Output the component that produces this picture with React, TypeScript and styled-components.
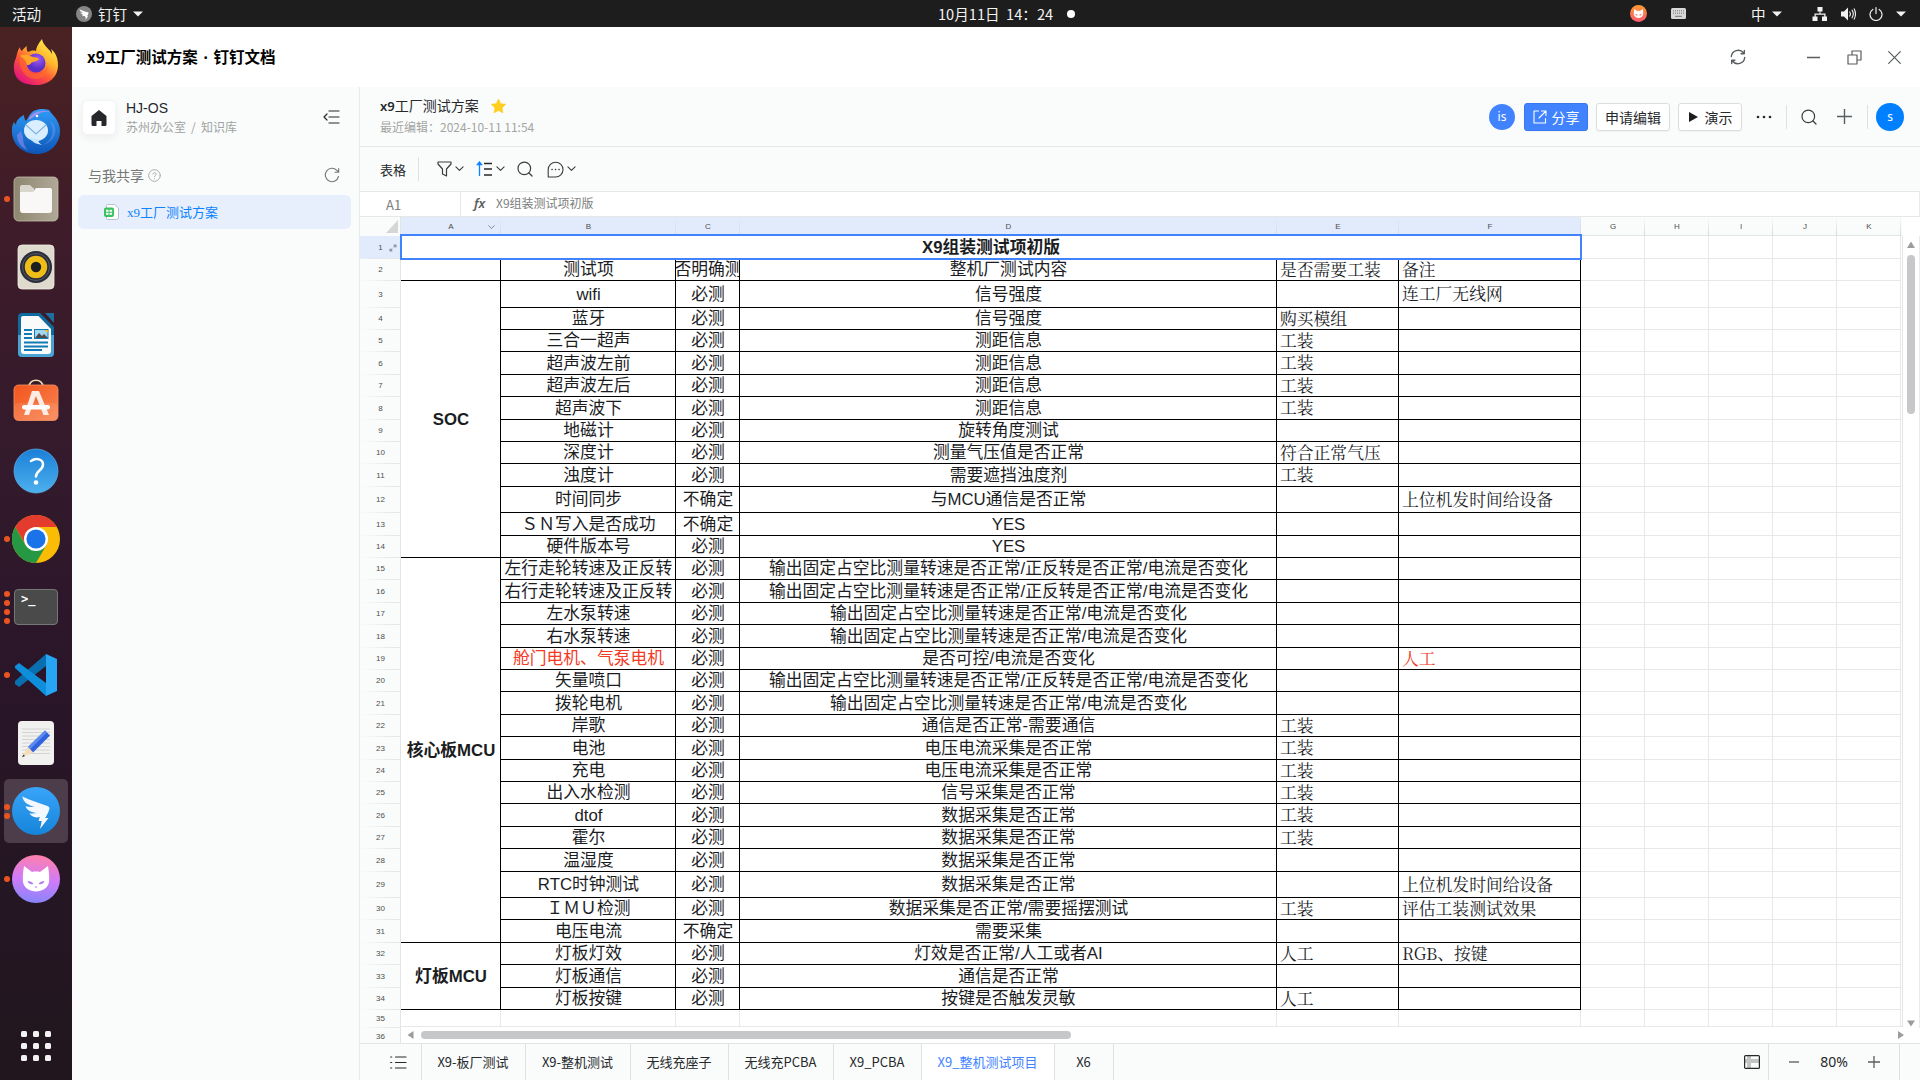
import React from "react";
import styled, { createGlobalStyle, css } from "styled-components";

const SANS = `"Noto Sans CJK SC", "Noto Sans", sans-serif`;
const CELL = `"Liberation Sans", "Noto Sans CJK SC", sans-serif`;
const SERIF = `"Noto Serif CJK SC", "Noto Serif CJK JP", "Liberation Serif", serif`;

const Global = createGlobalStyle`
  *, *::before, *::after { box-sizing: border-box; }
  body { margin: 0; background: #fff; font-family: ${SANS}; color: #26282b; overflow: hidden; }
  svg { display: block; flex: none; }
`;

/* ---------- shell ---------- */
const Desktop = styled.div`
  width: 1920px;
  height: 1080px;
  display: flex;
  flex-direction: column;
  overflow: hidden;
`;
const TopBar = styled.header`
  height: 27px;
  flex: none;
  display: flex;
  align-items: center;
  background: #1d1d1d;
  color: #f2f2f2;
  font-size: 15px;
  line-height: 26px;
  white-space: nowrap;
`;
const TopGroup = styled.div<{ $w: number; $pl?: number; $gap?: number }>`
  width: ${(p) => p.$w}px;
  height: 26px;
  padding-left: ${(p) => p.$pl ?? 0}px;
  display: flex;
  align-items: center;
  gap: ${(p) => p.$gap ?? 0}px;
`;
const TopLabel = styled.span`
  font-size: 14.6px;
`;
const Body = styled.div`
  flex: 1;
  display: flex;
  min-height: 0;
`;
const Dock = styled.nav`
  width: 72px;
  flex: none;
  display: flex;
  flex-direction: column;
  padding-top: 2px;
  background: linear-gradient(180deg, #4a2222 0%, #3f1c29 18%, #331a2c 42%, #2a1529 62%, #251624 80%, #21161d 100%);
`;
const DockItem = styled.div`
  height: 68px;
  display: grid;
  grid-template-columns: 4px 6px 52px 10px;
  align-items: center;
  position: relative;
`;
const Dots = styled.div`
  grid-column: 2;
  display: flex;
  flex-direction: column;
  gap: 3px;
  z-index: 1;
`;
const Dot = styled.i`
  width: 6px;
  height: 6px;
  border-radius: 50%;
  background: #e95420;
`;
const DockIcon = styled.div`
  grid-column: 3;
  padding-left: 2px;
  z-index: 1;
`;
const DockHighlight = styled.div`
  position: absolute;
  left: 4px;
  top: 2px;
  width: 64px;
  height: 64px;
  border-radius: 5px;
  background: #4d3d4b;
`;
const AppsGrid = styled.div`
  margin: auto auto 19px 21px;
  display: grid;
  grid-template-columns: repeat(3, 6px);
  grid-auto-rows: 6px;
  gap: 6px;
  i { background: #f3f1f1; border-radius: 1.5px; }
`;
const Window = styled.main`
  flex: 1;
  min-width: 0;
  display: flex;
  flex-direction: column;
  background: #fafcfb;
`;
const TitleBar = styled.div`
  height: 60px;
  flex: none;
  display: flex;
  align-items: center;
  padding: 0 19px 0 15px;
  background: #fff;
  color: #000;
`;
const WindowTitle = styled.h1`
  margin: -2px 0 0;
  flex: 1;
  font-size: 15.5px;
  font-weight: 700;
  span { font-family: "Noto Sans"; word-spacing: 1.6px; }
`;
const WindowButtons = styled.div`
  display: flex;
  align-items: center;
`;
const Gap = styled.span<{ $w: number; $h?: number }>`
  width: ${(p) => p.$w}px;
  height: ${(p) => p.$h ?? 0}px;
  flex: none;
`;
const Content = styled.div`
  flex: 1;
  min-height: 0;
  display: flex;
`;

/* ---------- sidebar ---------- */
const Sidebar = styled.aside`
  width: 288px;
  flex: none;
  border-right: 1px solid #e9ebea;
`;
const SpaceRow = styled.div`
  display: flex;
  align-items: flex-start;
  padding: 13px 19px 0 10px;
  height: 70px;
`;
const HomeButton = styled.div`
  width: 34px;
  height: 35px;
  display: grid;
  place-items: center;
  background: #fff;
  border: 1px solid #f2f3f3;
  border-radius: 5px;
  box-shadow: 0 3px 8px rgba(0, 0, 0, 0.06);
`;
const SpaceText = styled.div`
  flex: 1;
  padding-left: 10px;
`;
const SpaceName = styled.div`
  font: 14px/16px "Liberation Sans", sans-serif;
`;
const SpacePath = styled.div`
  font-size: 12px;
  line-height: 16px;
  margin-top: 3px;
  color: #a0a3a2;
  word-spacing: 2.4px;
`;
const SharedRow = styled.div`
  display: flex;
  align-items: center;
  height: 36px;
  padding: 0 19px 0 16px;
  font-size: 14px;
  color: #757877;
`;
const FileRow = styled.div`
  display: flex;
  align-items: center;
  gap: 8px;
  height: 34px;
  margin: 2px 8px 0 6px;
  padding-left: 26px;
  border-radius: 6px;
  background: #e7eefc;
  color: #0b84ff;
  font: 13px/34px "Liberation Serif", "Noto Sans CJK SC", sans-serif;
  span { padding-top: 1px; }
`;

/* ---------- document ---------- */
const Doc = styled.section`
  flex: 1;
  min-width: 0;
  display: flex;
  flex-direction: column;
`;
const DocHeader = styled.div`
  height: 60px;
  flex: none;
  display: flex;
  align-items: center;
  padding: 0 16px 0 20px;
  border-bottom: 1px solid #e6e8e7;
`;
const DocTitleBlock = styled.div`
  flex: 1;
  margin-top: -2px;
`;
const DocTitle = styled.div`
  display: flex;
  align-items: center;
  gap: 12px;
  font-size: 14px;
  font-weight: 400;
  line-height: 20px;
  b { font-family: "Noto Sans"; font-weight: 600; font-size: 13px; }
`;
const DocMeta = styled.div`
  font-size: 12px;
  line-height: 18px;
  margin-top: 2px;
  color: #a3a5a4;
`;
const Avatar = styled.div<{ $d: number; $c: string }>`
  width: ${(p) => p.$d}px;
  height: ${(p) => p.$d}px;
  border-radius: 50%;
  display: grid;
  place-items: center;
  background: ${(p) => p.$c};
  color: #fff;
  font: 12px/1 "Noto Sans", sans-serif;
`;
const Button = styled.div<{ $w: number; $primary?: boolean }>`
  width: ${(p) => p.$w}px;
  height: 28px;
  display: flex;
  align-items: center;
  justify-content: center;
  gap: 5px;
  font-size: 14px;
  line-height: 26px;
  border-radius: 3px;
  border: 1px solid #dcdedd;
  background: #fff;
  box-shadow: 0 1px 1px rgba(0, 0, 0, 0.04);
  ${(p) =>
    p.$primary &&
    css`
      background: #4183ff;
      border-color: #3a78f0;
      color: #fff;
    `}
`;
const VLine = styled.span<{ $h: number }>`
  width: 1px;
  height: ${(p) => p.$h}px;
  flex: none;
  background: #dfe1e0;
`;
const Toolbar = styled.div`
  height: 45px;
  flex: none;
  display: flex;
  align-items: center;
  padding-left: 20px;
  border-bottom: 1px solid #e6e8e7;
  font-size: 13px;
  line-height: 43px;
`;
const FormulaBar = styled.div`
  height: 25px;
  flex: none;
  display: flex;
  align-items: flex-start;
  background: #fff;
  border-bottom: 1px solid #e6e8e7;
  border-right: 1px solid #e9ebea;
  font-size: 12px;
  line-height: 22px;
  color: #7b7e7d;
`;
const NameBox = styled.div`
  width: 101px;
  height: 24px;
  padding: 1px 0 0 26px;
  border-right: 1px solid #e6e8e7;
  font-size: 13px;
  line-height: 23px;
`;
const Fx = styled.i`
  width: 35px;
  padding-left: 13px;
  color: #5c5f5e;
  font: italic 600 13px/23px "Noto Sans", sans-serif;
`;

/* ---------- sheet ---------- */
const Sheet = styled.div`
  height: 827px;
  flex: none;
  display: flex;
  position: relative;
  background: #fff;
  border-bottom: 1px solid #e3e5e4;
  overflow: hidden;
`;
const RowHeads = styled.div`
  width: 41px;
  flex: none;
  background: #fafcfb;
  border-right: 1px solid #e3e5e4;
`;
const Corner = styled.div`
  height: 19px;
  display: flex;
  justify-content: flex-end;
  align-items: flex-end;
  padding: 0 2px 3px 0;
`;
const RowHead = styled.div<{ $h: number; $on?: boolean }>`
  height: ${(p) => p.$h}px;
  display: flex;
  align-items: center;
  justify-content: center;
  padding-left: 1px;
  font: 8px/1 "Liberation Sans", sans-serif;
  color: #4b4e4d;
  position: relative;
  background: linear-gradient(90deg, transparent, #e6e8e7 80%) bottom / 100% 1px no-repeat, ${(p) => (p.$on ? "#e2ebfb" : "#fafcfb")};
  svg { position: absolute; right: 3px; bottom: 7px; }
`;
const GridArea = styled.div`
  width: 1501px;
  flex: none;
`;
const ColHeads = styled.div`
  display: flex;
  height: 19px;
  border-bottom: 1px solid #e3e5e4;
  background: #fafcfb;
`;
const ColHead = styled.div<{ $w: number; $on?: boolean }>`
  width: ${(p) => p.$w}px;
  display: flex;
  align-items: center;
  justify-content: center;
  font: 8px/1 "Liberation Sans", sans-serif;
  color: #4b4e4d;
  padding-top: 1px;
  position: relative;
  background: linear-gradient(180deg, transparent, #d5dae0) right / 1px 100% no-repeat, ${(p) => (p.$on ? "#e2ebfb" : "#fafcfb")};
  svg { position: absolute; right: 6px; top: 8px; }
`;
const Cells = styled.div<{ $cols: string; $rows: string }>`
  display: grid;
  grid-template-columns: ${(p) => p.$cols};
  grid-template-rows: ${(p) => p.$rows};
  height: 791px;
  overflow: hidden;
  border-bottom: 1px solid #e8e8e8;
`;
type CellProps = { $c: number; $r: number; $span?: number; $cspan?: number; $line?: string; $left?: boolean; $bold?: boolean; $red?: boolean };
const Cell = styled.div<CellProps>`
  grid-column: ${(p) => p.$c} / span ${(p) => p.$cspan ?? 1};
  grid-row: ${(p) => p.$r} / span ${(p) => p.$span ?? 1};
  border: 0 solid ${(p) => p.$line ?? "#000"};
  border-width: 0 1px 1px 0;
  display: flex;
  align-items: center;
  justify-content: center;
  padding-left: 1px;
  padding-top: ${(p) => (p.$bold ? 2 : 1)}px;
  white-space: nowrap;
  overflow: hidden;
  font: ${(p) => (p.$bold ? 700 : 400)} 16.8px/20px ${CELL};
  color: ${(p) => (p.$red ? "#f23a25" : "#1b1d1f")};
  ${(p) =>
    p.$left &&
    css`
      justify-content: flex-start;
      padding: 0 0 2px 3px;
      font-family: ${SERIF};
    `}
`;
const Selection = styled.div`
  position: absolute;
  left: 40px;
  top: 17px;
  width: 1182px;
  height: 26px;
  border: 2px solid #4183ff;
`;
const VScroll = styled.div`
  flex: 1;
  margin-top: 19px;
  height: 792px;
  border-left: 1px solid #e3e5e4;
  border-right: 1px solid #e9ebea;
  display: flex;
  flex-direction: column;
  align-items: center;
  padding: 5px 0 0 0;
`;
const Thumb = styled.div<{ $w: number; $h: number }>`
  width: ${(p) => p.$w}px;
  height: ${(p) => p.$h}px;
  border-radius: 4px;
  background: #c6c7c9;
`;
const HScroll = styled.div`
  position: absolute;
  left: 41px;
  bottom: 0;
  width: 1518px;
  height: 16px;
  display: flex;
  align-items: center;
  padding: 0 14px 0 6px;
  background: #fff;
`;

/* ---------- footer ---------- */
const Footer = styled.div`
  flex: 1;
  display: flex;
  align-items: stretch;
`;
const Tab = styled.div<{ $w: number; $active?: boolean }>`
  width: ${(p) => p.$w}px;
  padding-right: 1px;
  border-right: 1px solid #dfe1e0;
  text-align: center;
  font-size: 13px;
  line-height: 36px;
  white-space: nowrap;
  background: ${(p) => (p.$active ? "#fff" : "none")};
  color: ${(p) => (p.$active ? "#4183ff" : "#26282b")};
`;
const FootBox = styled.div<{ $w: number; $pl?: number; $line?: boolean }>`
  width: ${(p) => p.$w}px;
  padding-left: ${(p) => p.$pl ?? 0}px;
  display: flex;
  align-items: center;
  border-right: ${(p) => (p.$line ? 1 : 0)}px solid #dfe1e0;
`;
const Zoom = styled.span`
  width: 48px;
  margin: 0 10px 0 11px;
  text-align: center;
  font: 14px/1 "Noto Sans", sans-serif;
`;
const Spacer = styled.span`
  flex: 1;
`;

/* ---------- small icons ---------- */
const Stroke = ({ w = 18, h = w, vb, d, c = "#3a3d3f", sw = 1.2, children }: { w?: number; h?: number; vb?: string; d?: string; c?: string; sw?: number; children?: React.ReactNode }) => (
  <svg width={w} height={h} viewBox={vb ?? `0 0 ${w} ${h}`} fill="none" stroke={c} strokeWidth={sw} strokeLinecap="round" strokeLinejoin="round">
    {d && <path d={d} />}
    {children}
  </svg>
);
const Caret = () => (
  <svg width="10" height="6" viewBox="0 0 10 6"><path d="M0 .5h10L5 5.5z" fill="#f2f2f2" /></svg>
);
const Chevron = ({ c = "#3a3d3f", w = 9 }: { c?: string; w?: number }) => <Stroke w={w} h={w * 0.6} vb="0 0 10 6" c={c} d="M1 1l4 4 4-4" />;
const Tri = ({ d, c = "#9b9d9c" }: { d: string; c?: string }) => (
  <svg width="8" height="8" viewBox="0 0 8 8"><path d={d} fill={c} /></svg>
);
const Search = ({ s = 16 }: { s?: number }) => (
  <Stroke w={s} vb="0 0 16 16"><circle cx="7.3" cy="7.4" r="6.3" /><path d="M12 12l3 3" /></Stroke>
);

/* ---------- dock icons ---------- */
const Firefox = () => (
  <svg width="48" height="48" viewBox="0 0 48 48">
    <defs>
      <linearGradient id="ff1" x1=".85" y1=".05" x2=".2" y2=".95"><stop offset="0" stopColor="#fff44f" /><stop offset=".35" stopColor="#ffb52e" /><stop offset=".62" stopColor="#ff5a36" /><stop offset="1" stopColor="#e3127e" /></linearGradient>
      <radialGradient id="ff2" cx=".6" cy=".3"><stop offset="0" stopColor="#a45cf5" /><stop offset="1" stopColor="#5a2fc9" /></radialGradient>
    </defs>
    <path d="M30 0c-4 5-6 9-6 12-3-1-6 0-8 1-1-1-2-4-1-6-2 1-4 3-5 5C8 11 8 9 8 8c-3 4-3 8-4 11-3 6-3 14 1 20 4 5 11 7 19 7 13 0 22-8 22-20 0-8-3-13-7-16 1 2 1 4 1 5C38 10 31 7 30 0z" fill="url(#ff1)" />
    <circle cx="24" cy="24" r="9.5" fill="url(#ff2)" />
    <path d="M8 17c4-2 8-1 10 0 4 2 8 1 9 3-2 3-6 2-8 4-1 2-3 2-4 2 0 5 4 9 10 9 5 0 9-3 10-8 2 8-4 13-11 13C13 40 6 29 8 17z" fill="#ff6a2a" opacity=".6" />
    <path d="M8 17c4-2 8-1 10 0 4 2 8 1 9 3-2 3-6 2-8 4-1 2-3 2-4 2-1-4-3-7-7-9z" fill="#ffa52a" />
  </svg>
);
const Thunderbird = () => (
  <svg width="48" height="48" viewBox="0 0 48 48">
    <defs><linearGradient id="tb" x1="0" y1="0" x2="0" y2="1"><stop offset="0" stopColor="#2f9bf5" /><stop offset="1" stopColor="#0d55b8" /></linearGradient></defs>
    <path d="M17 9c4-7 12-8 20-6 1 1 2 3 4 5 5 5 7 11 7 16 0 13-10 23-23 23C11 47 1 38 0 26c-1-5 1-9 2-11l2 3c0-5 4-8 8-10 0 3 1 5 2 6z" fill="url(#tb)" />
    <path d="M16 13c3-6 8-9 15-9 4 0 5 0 7 1-5-1-10 0-14 3-3 2-5 4-8 5z" fill="#a98cf0" />
    <path d="M38 14c5 9 3 20-8 24 8-1 15-9 13-17-1-4-3-6-5-7z" fill="#7fa0f2" opacity=".4" />
    <path d="M5 28c0 7 4 13 11 15-4-4-5-8-5-13l-2-6z" fill="#8c8ff0" opacity=".6" />
    <ellipse cx="24" cy="23.500" rx="12" ry="10.500" fill="#d9efff" />
    <path d="M18 31c2 4 6 6 12 7-2-1-4-3-4-6z" fill="#c9e6ff" />
    <path d="M14 18l10 9 10-9" fill="none" stroke="#86b3dc" strokeWidth="1.200" />
    <circle cx="25" cy="9" r="1.300" fill="#fff" />
  </svg>
);
const Files = () => (
  <svg width="48" height="48" viewBox="0 0 48 48">
    <defs><linearGradient id="fi"><stop offset="0" stopColor="#8d8670" /><stop offset="1" stopColor="#b0a997" /></linearGradient></defs>
    <rect x="2" y="2" width="44" height="44" rx="4.500" fill="url(#fi)" stroke="#c4beab" strokeWidth=".8" />
    <path d="M8 12a2 2 0 012-2h8l3 3h1v6H8z" fill="#d9d6cc" />
    <path d="M8 17h13l3-4h14a2 2 0 012 2v20a3 3 0 01-3 3H11a3 3 0 01-3-3z" fill="#f9f8f6" />
  </svg>
);
const Rhythm = () => (
  <svg width="48" height="48" viewBox="0 0 48 48">
    <rect x="6" y="2" width="36" height="44" rx="4" fill="#dedacd" stroke="#f0ede4" strokeWidth=".8" />
    <circle cx="24" cy="24" r="16" fill="#2b2d3a" /><circle cx="24" cy="24" r="13.500" fill="none" stroke="#555865" strokeWidth="1" />
    <circle cx="24" cy="24" r="11.200" fill="#efbd17" /><circle cx="24" cy="24" r="5.200" fill="#1d1e20" />
  </svg>
);
const Writer = () => (
  <svg width="48" height="48" viewBox="0 0 48 48">
    <path d="M10 2h18l14 14v26a4 4 0 01-4 4H10a4 4 0 01-4-4V6a4 4 0 014-4z" fill="#0f6b9e" />
    <path d="M6 24h36v18a4 4 0 01-4 4H10a4 4 0 01-4-4z" fill="#4aa3d0" />
    <path d="M9 7a2 2 0 012-2h15.500L39 18v22a3 3 0 01-3 3H12a3 3 0 01-3-3z" fill="#fafafa" />
    <path d="M33 2h9v10z" fill="#1e6f9e" />
    <path d="M12 19h8M12 23h8M12 27h8M12 31.500h24M12 35.500h24M12 39h18" stroke="#107ab5" strokeWidth="2" />
    <rect x="22.500" y="18.500" width="13.500" height="9" fill="#a3d4f0" stroke="#107ab5" />
    <path d="M23 27l4-5 3 3 2-2 4 4z" fill="#4b4b4b" /><path d="M33 19h3v3z" fill="#f6b500" />
  </svg>
);
const Software = () => (
  <svg width="48" height="48" viewBox="0 0 48 48">
    <defs><linearGradient id="sw" x1="0" y1="0" x2="1" y2="1"><stop offset="0" stopColor="#f2551c" /><stop offset="1" stopColor="#f98553" /></linearGradient></defs>
    <path d="M17 8c0-9 14-9 14 0" fill="none" stroke="#f6dcb0" strokeWidth="1.600" />
    <rect x="2" y="6" width="44" height="35.500" rx="4.500" fill="url(#sw)" stroke="#f99468" strokeWidth=".8" />
    <rect x="2.500" y="24" width="43" height="17" rx="4" fill="#fff" opacity=".1" />
    <path d="M20 12h7l10 24h-5.500L24 17l-7 19h-5z" fill="#fdece3" />
    <rect x="10" y="26" width="28" height="4.500" rx="2.200" fill="#fff" />
  </svg>
);
const Help = () => (
  <svg width="48" height="48" viewBox="0 0 48 48">
    <defs><linearGradient id="hp" x1="0" y1="0" x2="0" y2="1"><stop offset="0" stopColor="#1b7fd8" /><stop offset="1" stopColor="#4db0ee" /></linearGradient></defs>
    <circle cx="24" cy="24" r="22" fill="url(#hp)" stroke="#5db4ee" strokeWidth=".7" />
    <path d="M19 14c5-3.500 12-2 12 3.500 0 6-7 6-7 12" fill="none" stroke="#fff" strokeWidth="2.500" strokeLinecap="round" />
    <circle cx="24" cy="35.500" r="2.300" fill="#fff" />
  </svg>
);
const Chrome = () => (
  <svg width="48" height="48" viewBox="0 0 48 48">
    <circle cx="24" cy="24" r="24" fill="#fbbc05" />
    <path d="M3.200 12A24 24 0 0144.800 12H24L14 30z" fill="#e33b2e" />
    <path d="M3.200 12A24 24 0 0024 48l10.400-18H13.600z" fill="#269844" />
    <circle cx="24" cy="24" r="12" fill="#fff" /><circle cx="24" cy="24" r="9.600" fill="#1a73e8" />
  </svg>
);
const Prompt = styled.span`
  display: block;
  width: 44px;
  height: 36px;
  margin: 0 2px;
  padding: 3px 0 0 6px;
  border-radius: 4px;
  border: 1px solid #777;
  background: #4a4a4a;
  color: #fff;
  font: 700 12px/13px "DejaVu Sans Mono", monospace;
`;
const VsCode = () => (
  <svg width="48" height="48" viewBox="0 0 48 48">
    <path d="M34 3L3 30v3l4 3 27-21z" fill="#0a6fb0" />
    <path d="M34 45L3 17v-2l4-3 27 20z" fill="#0f8fdb" />
    <path d="M34 3l11 5v32l-11 5z" fill="#28a5f2" />
  </svg>
);
const Editor = () => (
  <svg width="48" height="48" viewBox="0 0 48 48">
    <rect x="6" y="2" width="36" height="44" rx="4" fill="#f1f1f0" />
    <path d="M10 10h28M10 13.500h28M10 17h28M10 20.500h28M10 24h28M10 27.500h28M10 31h28M10 34.500h28" stroke="#cfcfcf" strokeWidth=".9" />
    <path d="M16 28L33 11.500l5 5L21 33.500z" fill="#2f62dd" /><path d="M16 28L33 11.500l2 2L18 30.500z" fill="#5a8af0" />
    <path d="M16 28l-6 10 11-4.500z" fill="#f5dcb8" /><path d="M11.500 35.500L10 38.300l3-1.200z" fill="#333" />
  </svg>
);
const Wing = "M10.500 9.500c8 4.200 16 6.200 25 9.500 2 .8 2.300 2 1.700 3.800-1 3.200-2.400 5.700-4 8.200h3.300L28 42l1.800-8h-3.300l1.300-4c-5 1.200-8.500-.5-10.300-3.700 2.500.4 5 .4 7.500-.2-6-.6-10-2.800-11.500-6.800 3 .7 6 .9 9 .6-6.500-1.700-11.500-4.700-12-10.400z";
const Ding = () => (
  <svg width="48" height="48" viewBox="0 0 48 48">
    <defs><linearGradient id="dd" x1="0" y1="0" x2="0" y2="1"><stop offset="0" stopColor="#38a5fa" /><stop offset="1" stopColor="#1684d8" /></linearGradient></defs>
    <circle cx="24" cy="24" r="24" fill="url(#dd)" /><path d={Wing} fill="#f3f8fe" />
  </svg>
);
const catFace = "M12 11l8 6c2-.6 6-.6 8 0l8-6c1 6 1.500 11 1 16-1 6-7 9.500-13 9.500S12 33 11 27c-.5-5 0-10 1-16z";
const Cat = () => (
  <svg width="48" height="48" viewBox="0 0 48 48">
    <defs><linearGradient id="ct" x1=".5" y1="0" x2=".4" y2="1"><stop offset="0" stopColor="#ff80ab" /><stop offset=".5" stopColor="#d07bf8" /><stop offset="1" stopColor="#8685fb" /></linearGradient></defs>
    <circle cx="24" cy="24" r="24" fill="url(#ct)" /><path d={catFace} fill="#fff" />
    <path d="M15.500 26c2.500 0 5 1 6 3-2.500.8-5 0-6-3zM32.500 26c-2.500 0-5 1-6 3 2.500.8 5 0 6-3zM22.500 31.500h3L24 33z" fill="#b57af5" />
  </svg>
);
const Terminal = () => <Prompt>&gt;_</Prompt>;

const dock: { icon: React.FC; dots?: number; active?: boolean }[] = [
  { icon: Firefox }, { icon: Thunderbird }, { icon: Files, dots: 1 }, { icon: Rhythm }, { icon: Writer }, { icon: Software }, { icon: Help },
  { icon: Chrome, dots: 1 }, { icon: Terminal, dots: 4 }, { icon: VsCode, dots: 1 }, { icon: Editor }, { icon: Ding, dots: 2, active: true }, { icon: Cat, dots: 1 },
];

/* ---------- data ---------- */
const cols: [string, number][] = [["A", 100], ["B", 175], ["C", 64], ["D", 537], ["E", 122], ["F", 182], ["G", 64], ["H", 64], ["I", 64], ["J", 64], ["K", 64]];
const rowEnds = [259, 281, 308, 330, 352, 375, 397, 420, 442, 464, 487, 513, 536, 558, 580, 603, 625, 648, 670, 692, 715, 737, 760, 782, 804, 827, 849, 872, 898, 920, 943, 965, 988, 1010, 1028];
const heights = rowEnds.map((e, i) => e - (i ? rowEnds[i - 1] : 236));
const T = "必测";
const U = "不确定";
const LONG = "输出固定占空比测量转速是否正常/正反转是否正常/电流是否变化";
const SHORT = "输出固定占空比测量转速是否正常/电流是否变化";
const rows: string[][] = [
  ["测试项", "是否明确测试", "整机厂测试内容", "是否需要工装", "备注"],
  ["wifi", T, "信号强度", "", "连工厂无线网"],
  ["蓝牙", T, "信号强度", "购买模组", ""],
  ["三合一超声", T, "测距信息", "工装", ""],
  ["超声波左前", T, "测距信息", "工装", ""],
  ["超声波左后", T, "测距信息", "工装", ""],
  ["超声波下", T, "测距信息", "工装", ""],
  ["地磁计", T, "旋转角度测试", "", ""],
  ["深度计", T, "测量气压值是否正常", "符合正常气压", ""],
  ["浊度计", T, "需要遮挡浊度剂", "工装", ""],
  ["时间同步", U, "与MCU通信是否正常", "", "上位机发时间给设备"],
  ["ＳＮ写入是否成功", U, "YES", "", ""],
  ["硬件版本号", T, "YES", "", ""],
  ["左行走轮转速及正反转", T, LONG, "", ""],
  ["右行走轮转速及正反转", T, LONG, "", ""],
  ["左水泵转速", T, SHORT, "", ""],
  ["右水泵转速", T, SHORT, "", ""],
  ["舱门电机、气泵电机", T, "是否可控/电流是否变化", "", "人工"],
  ["矢量喷口", T, LONG, "", ""],
  ["拨轮电机", T, SHORT, "", ""],
  ["岸歌", T, "通信是否正常-需要通信", "工装", ""],
  ["电池", T, "电压电流采集是否正常", "工装", ""],
  ["充电", T, "电压电流采集是否正常", "工装", ""],
  ["出入水检测", T, "信号采集是否正常", "工装", ""],
  ["dtof", T, "数据采集是否正常", "工装", ""],
  ["霍尔", T, "数据采集是否正常", "工装", ""],
  ["温湿度", T, "数据采集是否正常", "", ""],
  ["RTC时钟测试", T, "数据采集是否正常", "", "上位机发时间给设备"],
  ["ＩＭＵ检测", T, "数据采集是否正常/需要摇摆测试", "工装", "评估工装测试效果"],
  ["电压电流", U, "需要采集", "", ""],
  ["灯板灯效", T, "灯效是否正常/人工或者AI", "人工", "RGB、按键"],
  ["灯板通信", T, "通信是否正常", "", ""],
  ["灯板按键", T, "按键是否触发灵敏", "人工", ""],
];
const tabs: [string, number][] = [["X9-板厂测试", 104], ["X9-整机测试", 105], ["无线充座子", 98], ["无线充PCBA", 105], ["X9_PCBA", 88], ["X9_整机测试项目", 133], ["X6", 59]];
const LIGHT = "#e8e8e8";

export default function App() {
  return (
    <Desktop>
      <Global />
      <TopBar>
        <TopGroup $w={76} $pl={12}><TopLabel>活动</TopLabel></TopGroup>
        <TopGroup $w={862} $gap={6}>
          <svg width="16" height="16" viewBox="0 0 48 48"><circle cx="24" cy="24" r="24" fill="#858585" /><path d={Wing} fill="#fff" /></svg>
          <TopLabel>钉钉</TopLabel>
          <Caret />
        </TopGroup>
        <TopGroup $w={692} $gap={14}>
          <TopLabel>10月11日&nbsp; 14：24</TopLabel>
          <svg width="8" height="8"><circle cx="4" cy="4" r="4" fill="#fff" /></svg>
        </TopGroup>
        <TopGroup $w={41}>
          <svg width="17" height="17" viewBox="0 0 48 48">
            <defs><linearGradient id="oc" x1="0" y1="0" x2="0" y2="1"><stop offset="0" stopColor="#ff9a2f" /><stop offset="1" stopColor="#fb5a70" /></linearGradient></defs>
            <circle cx="24" cy="24" r="24" fill="url(#oc)" /><path d={catFace} fill="#fff" /><path d="M16 27l5 2M32 27l-5 2" stroke="#f76b55" strokeWidth="3" />
          </svg>
        </TopGroup>
        <TopGroup $w={80}>
          <svg width="15" height="11" viewBox="0 0 15 11"><rect width="15" height="11" rx="1.500" fill="#d8d8d8" /><path d="M2 2.800h11M2 5.200h11" stroke="#777" strokeWidth="1" strokeDasharray="1 1" /><path d="M4 8.300h7" stroke="#777" /></svg>
        </TopGroup>
        <TopGroup $w={61} $gap={6}><TopLabel>中</TopLabel><Caret /></TopGroup>
        <TopGroup $w={107} $gap={13}>
          <svg width="16" height="14" viewBox="0 0 16 14"><path d="M5.500 0h5v4.500h-2v2h5V9.500H15V14h-5V9.500h2.200V7.700H3.700v1.800H5.500V14h-5V9.500h2v-3h5v-2h-2z" fill="#f2f2f2" /></svg>
          <svg width="15" height="14" viewBox="0 0 15 14"><path d="M0 4.500h3L7 .5v13l-4-4H0z" fill="#f2f2f2" /><path d="M8.500 4.500q1.800 2.500 0 5M10.800 2.800q3 4.200 0 8.400M13 1.500q3 5.500 0 11" stroke="#f2f2f2" fill="none" strokeWidth="1.100" /></svg>
          <Stroke w={14} c="#f2f2f2" d="M3.800 2.400a6 6 0 106.400 0M7 .6v6" />
          <Caret />
        </TopGroup>
      </TopBar>
      <Body>
        <Dock>
          {dock.map(({ icon: Icon, dots = 0, active }, i) => (
            <DockItem key={i}>
              {active && <DockHighlight />}
              <Dots>{Array.from({ length: dots }, (_, k) => <Dot key={k} />)}</Dots>
              <DockIcon><Icon /></DockIcon>
            </DockItem>
          ))}
          <AppsGrid>{Array.from({ length: 9 }, (_, k) => <i key={k} />)}</AppsGrid>
        </Dock>
        <Window>
          <TitleBar>
            <WindowTitle>x9工厂测试方案<span> · </span>钉钉文档</WindowTitle>
            <WindowButtons>
              <Stroke w={16} sw={1.4} c="#5a5d60" d="M1.300 7.500A6.800 6.800 0 0113.500 4M14.700 8.500A6.800 6.800 0 012.500 12M14.300 1.500v3.200h-3.200M1.700 14.500v-3.200h3.200" />
              <Gap $w={61} />
              <Stroke w={13} sw={1.3} c="#5a5d60" d="M0 6.500h13" />
              <Gap $w={27} />
              <Stroke w={15} sw={1.2} c="#5a5d60" d="M1 5h9v9H1zM5 4.500V1h9v9h-3.500" />
              <Gap $w={26} />
              <Stroke w={13} sw={1.2} c="#5a5d60" d="M.7.7l11.600 11.600M12.300.7L.7 12.300" />
            </WindowButtons>
          </TitleBar>
          <Content>
            <Sidebar>
              <SpaceRow>
                <HomeButton>
                  <svg width="16" height="16" viewBox="0 0 16 16"><path d="M8 0l7.500 6v8.500A1.500 1.500 0 0114 16h-3.500v-5h-5v5H2A1.500 1.500 0 01.5 14.500V6z" fill="#26282b" /></svg>
                </HomeButton>
                <SpaceText>
                  <SpaceName>HJ-OS</SpaceName>
                  <SpacePath>苏州办公室 / 知识库</SpacePath>
                </SpaceText>
                <Stroke w={17} h={35} sw={1.2} c="#26282b" d="M4 14L1 17 4 20M6 11h10M6 17h10M6 23h10" />
              </SpaceRow>
              <SharedRow>
                与我共享
                <Gap $w={4} />
                <Stroke w={13} c="#aaacab" sw={1}><circle cx="6.500" cy="6.500" r="5.800" /><path d="M4.900 5.200c.2-2.200 3.300-2 3.200 0 0 1.200-1.600 1.300-1.600 2.500M6.500 9.600v.1" /></Stroke>
                <Spacer />
                <Stroke w={16} c="#757877" sw={1.1} d="M14.500 9.500A6.700 6.700 0 1112.800 3.300L14.500 5M14.700 1.500V5.200H11" />
              </SharedRow>
              <FileRow>
                <svg width="15" height="16" viewBox="0 0 15 16"><path d="M3.500.5h7l4 3.500v9.500a2 2 0 01-2 2h-9a1 1 0 01-1-1v-13a1 1 0 011-1z" fill="#fff" stroke="#b9bfc9" /><path d="M0 5.500a2 2 0 012-2h6a2 2 0 012 2v5.500a2 2 0 01-2 2H2a2 2 0 01-2-2z" fill="#38c25d" /><path d="M2 5.800h2.600v2H2zM5.500 5.800h2.600v2H5.500zM2 8.800h2.600v2H2zM5.500 8.800h2.600v2H5.500z" fill="#fff" /></svg>
                <span>x9工厂测试方案</span>
              </FileRow>
            </Sidebar>
            <Doc>
              <DocHeader>
                <DocTitleBlock>
                  <DocTitle>
                    <span><b>x9</b>工厂测试方案</span>
                    <svg width="15" height="14" viewBox="0 0 24 23"><path d="M12 0l3.600 7.600 8.400 1.100-6.100 5.800 1.500 8.300L12 18.800l-7.400 4 1.500-8.300L0 8.700l8.400-1.100z" fill="#ffce1f" stroke="#ffce1f" /></svg>
                  </DocTitle>
                  <DocMeta>最近编辑：2024-10-11 11:54</DocMeta>
                </DocTitleBlock>
                <Avatar $d={26} $c="#4183ff">is</Avatar>
                <Gap $w={9} />
                <Button $w={64} $primary>
                  <Stroke w={14} c="#fff" sw={1.1} d="M5.500 1H1v12h11.500V8.500M8.500 1H13v4.500M13 1L6 8" />分享
                </Button>
                <Gap $w={8} />
                <Button $w={74}>申请编辑</Button>
                <Gap $w={8} />
                <Button $w={64}>
                  <svg width="12" height="10" viewBox="0 0 12 10"><path d="M1 0l9 5-9 5z" fill="#1b1d1f" /></svg>演示
                </Button>
                <Gap $w={14} />
                <svg width="16" height="4"><circle cx="2" cy="2" r="1.300" fill="#26282b" /><circle cx="8" cy="2" r="1.300" fill="#26282b" /><circle cx="14" cy="2" r="1.300" fill="#26282b" /></svg>
                <Gap $w={14} /><VLine $h={24} /><Gap $w={14} />
                <Search />
                <Gap $w={20} />
                <Stroke w={15} sw={1.4} c="#5a5d60" d="M0 7.500h15M7.500 0v15" />
                <Gap $w={15} /><VLine $h={24} /><Gap $w={8} />
                <Avatar $d={28} $c="#0080ff">s</Avatar>
              </DocHeader>
              <Toolbar>
                表格
                <Gap $w={12} /><VLine $h={24} /><Gap $w={18} />
                <Stroke w={15} h={16} sw={1.2} d="M1 1h13v2L9.500 8v7l-4-2V8L1 3z" />
                <Gap $w={3} /><Chevron /><Gap $w={12} />
                <svg width="17" height="16" viewBox="0 0 17 16" fill="none" strokeWidth="1.300"><path d="M3.500 15V2M1.500 3.500l2-2.500 2 2.500z" stroke="#0b84ff" fill="#0b84ff" /><path d="M8 2.500h8M8 8h8M8 14h8" stroke="#26282b" /></svg>
                <Gap $w={3} /><Chevron /><Gap $w={12} />
                <Search />
                <Gap $w={14} />
                <Stroke w={17} sw={1.1}><path d="M1.200 16V8.500A7.400 7.400 0 118.600 16z" /><path d="M5 8.500h.1M8.500 8.500h.1M12 8.500h.1" strokeWidth="1.600" /></Stroke>
                <Gap $w={3} /><Chevron />
              </Toolbar>
              <FormulaBar>
                <NameBox>A1</NameBox>
                <Fx>fx</Fx>
                X9组装测试项初版
              </FormulaBar>
              <Sheet>
                <RowHeads>
                  <Corner><svg width="12" height="13" viewBox="0 0 12 13"><path d="M12 0v13H0z" fill="#d5d7d6" /></svg></Corner>
                  {heights.concat(18).map((h, i) => (
                    <RowHead key={i} $h={h} $on={i === 0}>
                      {i + 1}
                      {i === 0 && <Stroke w={8} c="#8a93a5" sw={1.1} d="M5 1h2v2M7 1L5 3M3 7H1V5M1 7l2-2" />}
                    </RowHead>
                  ))}
                </RowHeads>
                <GridArea>
                  <ColHeads>
                    {cols.map(([n, w], i) => (
                      <ColHead key={n} $w={w} $on={i < 6}>{n}{i === 0 && <Chevron w={7} c="#6d7680" />}</ColHead>
                    ))}
                  </ColHeads>
                  <Cells $cols={cols.map((c) => c[1] + "px").join(" ")} $rows={heights.map((h) => h + "px").join(" ")}>
                    <Cell $c={1} $r={1} $cspan={6} $bold>X9组装测试项初版</Cell>
                    <Cell $c={1} $r={2} />
                    <Cell $c={1} $r={3} $span={12} $bold>SOC</Cell>
                    <Cell $c={1} $r={15} $span={17} $bold>核心板MCU</Cell>
                    <Cell $c={1} $r={32} $span={3} $bold>灯板MCU</Cell>
                    {rows.map((r, i) =>
                      r.map((t, j) => (
                        <Cell key={`${i}-${j}`} $c={j + 2} $r={i + 2} $left={j > 2} $red={i === 17 && (j === 0 || j === 4)}>{t}</Cell>
                      ))
                    )}
                    {heights.map((_, i) =>
                      cols.map(([n], j) => (j > 5 || i === 34 ? <Cell key={n + i} $c={j + 1} $r={i + 1} $line={LIGHT} /> : null))
                    )}
                  </Cells>
                </GridArea>
                <VScroll>
                  <Tri d="M4 .5L8 7H0z" />
                  <Gap $w={1} $h={6} />
                  <Thumb $w={8} $h={159} />
                  <Spacer />
                  <Tri d="M0 .5h8L4 6.500z" />
                </VScroll>
                <Selection />
                <HScroll>
                  <Tri d="M6.500 0v8L.5 4z" />
                  <Gap $w={6} />
                  <Thumb $w={650} $h={8} />
                  <Spacer />
                  <Tri d="M1 0v8l6-4z" />
                </HScroll>
              </Sheet>
              <Footer>
                <FootBox $w={62} $pl={30} $line>
                  <Stroke w={17} h={13} c="#26282b" sw={1.2} d="M5.500 1H16M5.500 6.500H16M5.500 12H16M.7 1h1M.7 6.500h1M.7 12h1" />
                </FootBox>
                {tabs.map(([t, w], i) => <Tab key={t} $w={w} $active={i === 5}>{t}</Tab>)}
                <Spacer />
                <FootBox $w={25} $line>
                  <svg width="16" height="14" viewBox="0 0 16 14" fill="none"><path d="M3 0h4v14H3zM0 4h16v4H0z" fill="#c3c5c4" /><rect x=".6" y=".6" width="14.800" height="12.800" rx="1" stroke="#26282b" strokeWidth="1.200" /></svg>
                </FootBox>
                <FootBox $w={131} $pl={20} $line>
                  <Stroke w={10} c="#26282b" d="M.5 5h9" /><Zoom>80%</Zoom><Stroke w={12} c="#5a5d60" sw={1.3} d="M0 6h12M6 0v12" />
                </FootBox>
                <Gap $w={20} />
              </Footer>
            </Doc>
          </Content>
        </Window>
      </Body>
    </Desktop>
  );
}
